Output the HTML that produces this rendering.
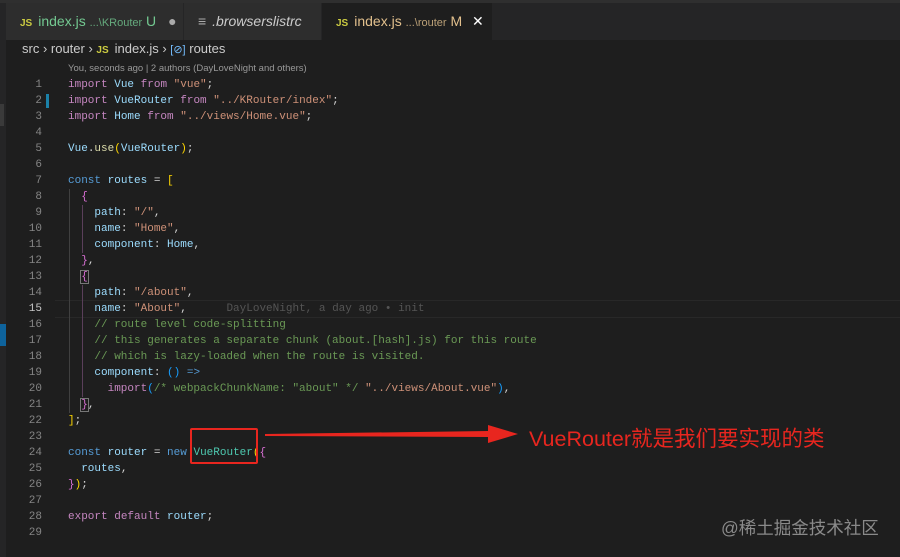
<!DOCTYPE html>
<html><head><meta charset="utf-8"><style>
*{margin:0;padding:0;box-sizing:border-box}
body{width:900px;height:557px;background:#1e1e1e;overflow:hidden;position:relative;font-family:"Liberation Sans",sans-serif}
.tabs{position:absolute;left:0;top:0;width:900px;height:40px;background:#252526;border-top:3px solid #2f2f2f}
.tab{position:absolute;top:0;height:37px;font-size:14px;line-height:37px;white-space:nowrap}
.js{color:#cbcb41;font-weight:bold;font-size:10px;margin-right:6px}
.sm{font-size:11px;opacity:.8}
.code{position:absolute;left:0;top:77px;font-family:"Liberation Mono",monospace;font-size:11px;color:#d4d4d4}
.l{position:absolute;height:16px;line-height:16px;white-space:pre;left:68px}
.n{position:absolute;height:16px;line-height:16px;width:42px;text-align:right;color:#858585;font-family:"Liberation Mono",monospace;font-size:11px}
.k{color:#c586c0}.b{color:#569cd6}.s{color:#ce9178}.v{color:#9cdcfe}.c{color:#4ec9b0}.g{color:#6a9955}.y{color:#ffd700}.p{color:#da70d6}.f{color:#dcdcaa}.x{color:#179fff}
</style></head><body>
<div style="position:absolute;left:0;top:0;width:6px;height:557px;background:#252526"></div>
<div class="tabs">
 <div class="tab" style="left:6px;width:177px;background:#2d2d2d;padding-left:14px;color:#73c991"><span class="js">JS</span>index.js <span class="sm">...\KRouter</span> U <span style="color:#aaa;margin-left:8px">●</span></div>
 <div class="tab" style="left:184px;width:137px;background:#2d2d2d;padding-left:14px;color:#ccc;font-style:italic"><span style="font-style:normal;color:#aaa;margin-right:6px">≡</span>.browserslistrc</div>
 <div class="tab" style="left:322px;width:170px;background:#1e1e1e;padding-left:14px;color:#e2c08d"><span class="js">JS</span>index.js <span class="sm">...\router</span> M <span style="color:#fff;margin-left:6px;font-size:14px">✕</span></div>
</div>
<div style="position:absolute;left:22px;top:40px;height:18px;line-height:18px;font-size:13px;color:#ccc;white-space:nowrap">src › router › <span class="js">JS</span>index.js › <span style="color:#75beff;font-size:11px">[⊘]</span> routes</div>
<div style="position:absolute;left:68px;top:63px;font-size:9.5px;color:#999">You, seconds ago | 2 authors (DayLoveNight and others)</div>
<div style="position:absolute;left:0;top:104px;width:4px;height:22px;background:#3a3a3a"></div>
<div style="position:absolute;left:0;top:324px;width:6px;height:22px;background:#0e639c"></div>
<div style="position:absolute;left:46px;top:94px;width:3px;height:14px;background:#1b81a8"></div>
<div style="position:absolute;left:55px;top:300px;width:845px;height:18px;border-top:1px solid #282828;border-bottom:1px solid #282828"></div>
<div style="position:absolute;left:69px;top:189px;width:1px;height:224px;background:#404040"></div>
<div style="position:absolute;left:82px;top:285px;width:1px;height:112px;background:#5a3f5a"></div>
<div style="position:absolute;left:82px;top:205px;width:1px;height:48px;background:#5a3f5a"></div>
<div class="code">
<div class="n" style="top:0">1</div><div class="l" style="top:0"><span class="k">import</span> <span class="v">Vue</span> <span class="k">from</span> <span class="s">"vue"</span>;</div>
<div class="n" style="top:16px">2</div><div class="l" style="top:16px"><span class="k">import</span> <span class="v">VueRouter</span> <span class="k">from</span> <span class="s">"../KRouter/index"</span>;</div>
<div class="n" style="top:32px">3</div><div class="l" style="top:32px"><span class="k">import</span> <span class="v">Home</span> <span class="k">from</span> <span class="s">"../views/Home.vue"</span>;</div>
<div class="n" style="top:48px">4</div>
<div class="n" style="top:64px">5</div><div class="l" style="top:64px"><span class="v">Vue</span>.<span class="f">use</span><span class="y">(</span><span class="v">VueRouter</span><span class="y">)</span>;</div>
<div class="n" style="top:80px">6</div>
<div class="n" style="top:96px">7</div><div class="l" style="top:96px"><span class="b">const</span> <span class="v">routes</span> = <span class="y">[</span></div>
<div class="n" style="top:112px">8</div><div class="l" style="top:112px">  <span class="p">{</span></div>
<div class="n" style="top:128px">9</div><div class="l" style="top:128px">    <span class="v">path</span>: <span class="s">"/"</span>,</div>
<div class="n" style="top:144px">10</div><div class="l" style="top:144px">    <span class="v">name</span>: <span class="s">"Home"</span>,</div>
<div class="n" style="top:160px">11</div><div class="l" style="top:160px">    <span class="v">component</span>: <span class="v">Home</span>,</div>
<div class="n" style="top:176px">12</div><div class="l" style="top:176px">  <span class="p">}</span>,</div>
<div class="n" style="top:192px">13</div><div class="l" style="top:192px">  <span class="p" style="outline:1px solid #777">{</span></div>
<div class="n" style="top:208px">14</div><div class="l" style="top:208px">    <span class="v">path</span>: <span class="s">"/about"</span>,</div>
<div class="n" style="top:224px;color:#c6c6c6">15</div><div class="l" style="top:224px">    <span class="v">name</span>: <span class="s">"About"</span>,      <span style="color:#555">DayLoveNight, a day ago • init</span></div>
<div class="n" style="top:240px">16</div><div class="l" style="top:240px">    <span class="g">// route level code-splitting</span></div>
<div class="n" style="top:256px">17</div><div class="l" style="top:256px">    <span class="g">// this generates a separate chunk (about.[hash].js) for this route</span></div>
<div class="n" style="top:272px">18</div><div class="l" style="top:272px">    <span class="g">// which is lazy-loaded when the route is visited.</span></div>
<div class="n" style="top:288px">19</div><div class="l" style="top:288px">    <span class="v">component</span>: <span class="x">()</span> <span class="b">=&gt;</span></div>
<div class="n" style="top:304px">20</div><div class="l" style="top:304px">      <span class="k">import</span><span class="x">(</span><span class="g">/* webpackChunkName: "about" */</span> <span class="s">"../views/About.vue"</span><span class="x">)</span>,</div>
<div class="n" style="top:320px">21</div><div class="l" style="top:320px">  <span class="p" style="outline:1px solid #777">}</span>,</div>
<div class="n" style="top:336px">22</div><div class="l" style="top:336px"><span class="y">]</span>;</div>
<div class="n" style="top:352px">23</div>
<div class="n" style="top:368px">24</div><div class="l" style="top:368px"><span class="b">const</span> <span class="v">router</span> = <span class="b">new</span> <span class="c">VueRouter</span><span class="y">(</span><span class="p">{</span></div>
<div class="n" style="top:384px">25</div><div class="l" style="top:384px">  <span class="v">routes</span>,</div>
<div class="n" style="top:400px">26</div><div class="l" style="top:400px"><span class="p">}</span><span class="y">)</span>;</div>
<div class="n" style="top:416px">27</div>
<div class="n" style="top:432px">28</div><div class="l" style="top:432px"><span class="k">export</span> <span class="k">default</span> <span class="v">router</span>;</div>
<div class="n" style="top:448px">29</div>
</div>
<div style="position:absolute;left:190px;top:428px;width:68px;height:36px;border:2px solid #e8261f;border-radius:2px"></div>
<svg style="position:absolute;left:0;top:0" width="900" height="557"><polygon points="265,434 488,431 488,425 518,434 488,443 488,437 265,436" fill="#e8261f"/></svg>
<div style="position:absolute;left:529px;top:422px;font-size:21.5px;color:#e8261f;font-family:'Liberation Sans','Noto Sans CJK SC',sans-serif;white-space:nowrap">VueRouter就是我们要实现的类</div>
<div style="position:absolute;left:721px;top:515px;font-size:17.5px;color:#8a8a8a;font-family:'Liberation Sans','Noto Sans CJK SC',sans-serif;white-space:nowrap">@稀土掘金技术社区</div>
</body></html>
